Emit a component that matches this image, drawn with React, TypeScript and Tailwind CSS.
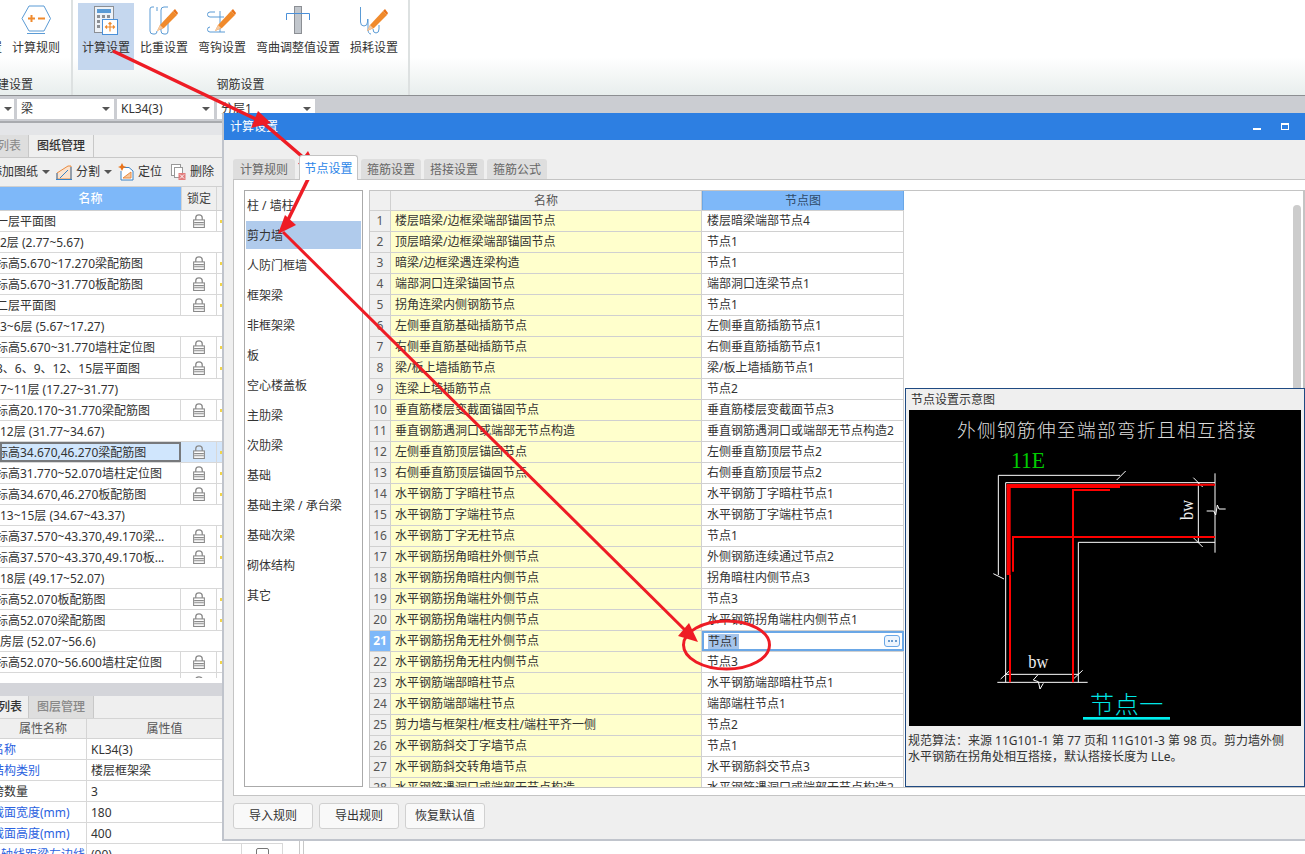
import React from 'react'

const drawingRows: { name: string; kind?: 'group' | 'selected' }[] = [
  { name: '一层平面图' },
  { name: '2层 (2.77~5.67)', kind: 'group' },
  { name: '标高5.670~17.270梁配筋图' },
  { name: '标高5.670~31.770板配筋图' },
  { name: '二层平面图' },
  { name: '3~6层 (5.67~17.27)', kind: 'group' },
  { name: '标高5.670~31.770墙柱定位图' },
  { name: '3、6、9、12、15层平面图' },
  { name: '7~11层 (17.27~31.77)', kind: 'group' },
  { name: '标高20.170~31.770梁配筋图' },
  { name: '12层 (31.77~34.67)', kind: 'group' },
  { name: '标高34.670,46.270梁配筋图', kind: 'selected' },
  { name: '标高31.770~52.070墙柱定位图' },
  { name: '标高34.670,46.270板配筋图' },
  { name: '13~15层 (34.67~43.37)', kind: 'group' },
  { name: '标高37.570~43.370,49.170梁...' },
  { name: '标高37.570~43.370,49.170板...' },
  { name: '18层 (49.17~52.07)', kind: 'group' },
  { name: '标高52.070板配筋图' },
  { name: '标高52.070梁配筋图' },
  { name: '房层 (52.07~56.6)', kind: 'group' },
  { name: '标高52.070~56.600墙柱定位图' },
  { name: '' },
]

const props = [
  ['名称', 'KL34(3)', true],
  ['结构类别', '楼层框架梁', true],
  ['跨数量', '3', false],
  ['截面宽度(mm)', '180', true],
  ['截面高度(mm)', '400', true],
] as const

const categories = ['柱 / 墙柱', '剪力墙', '人防门框墙', '框架梁', '非框架梁', '板', '空心楼盖板', '主肋梁', '次肋梁', '基础', '基础主梁 / 承台梁', '基础次梁', '砌体结构', '其它']

const nodeRows = [
  ['楼层暗梁/边框梁端部锚固节点', '楼层暗梁端部节点4'],
  ['顶层暗梁/边框梁端部锚固节点', '节点1'],
  ['暗梁/边框梁遇连梁构造', '节点1'],
  ['端部洞口连梁锚固节点', '端部洞口连梁节点1'],
  ['拐角连梁内侧钢筋节点', '节点1'],
  ['左侧垂直筋基础插筋节点', '左侧垂直筋插筋节点1'],
  ['右侧垂直筋基础插筋节点', '右侧垂直筋插筋节点1'],
  ['梁/板上墙插筋节点', '梁/板上墙插筋节点1'],
  ['连梁上墙插筋节点', '节点2'],
  ['垂直筋楼层变截面锚固节点', '垂直筋楼层变截面节点3'],
  ['垂直钢筋遇洞口或端部无节点构造', '垂直钢筋遇洞口或端部无节点构造2'],
  ['左侧垂直筋顶层锚固节点', '左侧垂直筋顶层节点2'],
  ['右侧垂直筋顶层锚固节点', '右侧垂直筋顶层节点2'],
  ['水平钢筋丁字暗柱节点', '水平钢筋丁字暗柱节点1'],
  ['水平钢筋丁字端柱节点', '水平钢筋丁字端柱节点1'],
  ['水平钢筋丁字无柱节点', '节点1'],
  ['水平钢筋拐角暗柱外侧节点', '外侧钢筋连续通过节点2'],
  ['水平钢筋拐角暗柱内侧节点', '拐角暗柱内侧节点3'],
  ['水平钢筋拐角端柱外侧节点', '节点3'],
  ['水平钢筋拐角端柱内侧节点', '水平钢筋拐角端柱内侧节点1'],
  ['水平钢筋拐角无柱外侧节点', '节点1'],
  ['水平钢筋拐角无柱内侧节点', '节点3'],
  ['水平钢筋端部暗柱节点', '水平钢筋端部暗柱节点1'],
  ['水平钢筋端部端柱节点', '端部端柱节点1'],
  ['剪力墙与框架柱/框支柱/端柱平齐一侧', '节点2'],
  ['水平钢筋斜交丁字墙节点', '节点1'],
  ['水平钢筋斜交转角墙节点', '水平钢筋斜交节点3'],
  ['水平钢筋遇洞口或端部无节点构造', '水平钢筋遇洞口或端部无节点构造2'],
]

// -------------------------------------------------------------
// Icons
// -------------------------------------------------------------
const Pencil = ({ x = 0 }: { x?: number }) => (
  <g transform={`translate(${x} 0)`}>
    <path d="M8 26 L11 20 L24 6 L28 10 L15 23 Z" fill="#f08a2c" />
    <path d="M8 26 L11 20 L14 23 Z" fill="#f5c9a0" />
    <path d="M24 6 L26 4 L29 8 L28 10 Z" fill="#e9731a" />
  </g>
)

const RuleIcon = () => (
  <svg width="32" height="31" viewBox="0 0 32 31" fill="none">
    <path d="M9 1 H24 L30.500 13.500 L24 26 H9 L2 13.500 Z" stroke="#5b9bd5" />
    <path d="M7 28.500 H25" stroke="#5b9bd5" />
    <path d="M8 13.500 H15 M11.500 10 V17 M18 13.500 H25" stroke="#f08a2c" strokeWidth="2" />
  </svg>
)

const CalcIcon = () => (
  <svg width="26" height="30" viewBox="0 0 26 30" fill="none">
    <rect x="1.500" y="1.500" width="19" height="26" fill="#eef2f7" stroke="#8c8f94" />
    <rect x="4" y="4" width="14" height="4" fill="#5b9bd5" />
    <path d="M4 10 h3 v3 h-3 Z M9 10 h3 v3 h-3 Z M14 10 h3 v3 h-3 Z M4 15 h3 v3 h-3 Z M4 20 h3 v3 h-3 Z" fill="#8c8f94" />
    <rect x="9.500" y="14.500" width="15" height="15" fill="#fff" stroke="#4a90d9" />
    <path d="M17 17.500 V26.500 M12.500 22 H21.500 M15.500 19 L17 17.500 L18.500 19 M14 20.500 L12.500 22 L14 23.500 M20 20.500 L21.500 22 L20 23.500" stroke="#f08a2c" strokeWidth="1.200" />
  </svg>
)

const SpringIcon = () => (
  <svg width="30" height="30" viewBox="0 0 30 30" fill="none">
    <path d="M5 2 H3 Q1 2 1 4 V26 Q1 29 4 29 H6 Q8 29 8 26 M19 2 H15 Q12 2 12 5 V26 Q12 29 15 29 H17 Q19 29 19 26 M8 2 V6 M19 12 V26" stroke="#5b9bd5" />
    <Pencil />
  </svg>
)

const HookIcon = () => (
  <svg width="30" height="30" viewBox="0 0 30 30" fill="none">
    <path d="M8 7 H3 Q0.500 7 0.500 9.500 Q0.500 12 3 12 H17 M3 22 Q0.500 22 0.500 24.500 Q0.500 27 3 27 H18 M13 6 V27" stroke="#5b9bd5" />
    <Pencil x={0} />
  </svg>
)

const BendIcon = () => (
  <svg width="26" height="30" viewBox="0 0 26 30" fill="none">
    <rect x="9.500" y="1.500" width="7" height="27" fill="#c1c6cc" stroke="#8c8f94" />
    <path d="M1.500 15 V8.500 H24.500 V15" stroke="#4a90d9" />
  </svg>
)

const LossIcon = () => (
  <svg width="30" height="30" viewBox="0 0 30 30" fill="none">
    <path d="M1.500 2 V17 Q1.500 21 5 21 Q8.500 21 8.500 17 V14 M9 14 V24 Q9 29 12 29 M14 24 Q14 28 17 28 Q20 28 20 24 V20" stroke="#5b9bd5" />
    <Pencil />
  </svg>
)

const LockIcon = () => (
  <svg width="12" height="14" viewBox="0 0 11 13" fill="none">
    <path d="M2.500 6 V3.500 Q2.500 0.800 5.500 0.800 Q8.500 0.800 8.500 3.500 V6" stroke="#8a8a8a" strokeWidth="1.200" />
    <rect x="0.500" y="5.500" width="10" height="7" fill="#fff" stroke="#8a8a8a" />
    <path d="M1 8 H10 M1 10 H10" stroke="#8a8a8a" />
  </svg>
)

const SplitIcon = () => (
  <svg width="16" height="15" viewBox="0 0 16 15" fill="none">
    <path d="M1 14 V8 L12 1 H15 V14 Z" fill="#fbe3cf" stroke="#e98a3f" />
    <path d="M0 14.500 H16 M1 8 V14 M15 2 V14" stroke="#3b82c4" />
    <path d="M4 13 L12 5" stroke="#3b82c4" />
  </svg>
)

const LocateIcon = () => (
  <svg width="16" height="18" viewBox="0 0 16 18" fill="none">
    <path d="M5 4.500 H11 L15 8 V17 H3 V8" fill="#fff" stroke="#3b82c4" />
    <path d="M5 15 L13 9 V15 Z" fill="#f6c79f" stroke="#e98a3f" />
    <path d="M4 0 L5.500 3 L8.500 4 L5.500 5 L4 8 L2.500 5 L0 4 L2.500 3 Z" fill="#e9731a" />
  </svg>
)

const DeleteIcon = () => (
  <svg width="15" height="16" viewBox="0 0 15 16" fill="none">
    <rect x="0.500" y="0.500" width="9" height="11" fill="#fff" stroke="#999" />
    <rect x="3.500" y="3.500" width="8" height="10" fill="#fff" stroke="#999" />
    <rect x="7.500" y="9" width="7" height="7" fill="#e27c7c" />
    <path d="M9 10.500 L13 14.500 M13 10.500 L9 14.500" stroke="#fff" />
  </svg>
)

const Caret = () => <span className="block h-0 w-0 border-x-[4px] border-t-[4px] border-x-transparent border-t-[#555]" />

// -------------------------------------------------------------
// Ribbon and combo strip
// -------------------------------------------------------------
function RibbonItem({ icon, label, active }: { icon: React.ReactNode; label: string; active?: boolean }) {
  return (
    <div className={`flex h-[67px] flex-col items-center px-[4px] ${active ? 'bg-[#c5d7ee]' : ''}`}>
      <div className="flex h-[36px] items-start justify-center pt-[2px]">{icon}</div>
      <span className="mt-[1px] whitespace-nowrap text-[12px] leading-[16px]">{label}</span>
    </div>
  )
}

function Ribbon() {
  return (
    <div className="flex h-[96px] border-b border-[#8d8f92] bg-linear-to-b from-white from-60% to-[#e8eeed] text-[#333]">
      <div className="flex w-[73px] flex-col overflow-hidden border-r-2 border-[#dde1e1] pb-[2px]">
        <div className="flex h-[70px] pt-[3px]">
          <span className="-ml-[22px] mt-[37px] w-[24px] whitespace-nowrap text-[12px] leading-[16px]">设置</span>
          <div className="ml-[6px]"><RibbonItem icon={<RuleIcon />} label="计算规则" /></div>
        </div>
        <div className="-ml-[3px] mt-[4px] whitespace-nowrap text-[12px] leading-[22px]">建设置</div>
      </div>
      <div className="flex w-[337px] flex-col border-r-2 border-[#dde1e1] pb-[2px]">
        <div className="flex h-[70px] gap-[2px] pl-[5px] pt-[3px]">
          <RibbonItem active icon={<CalcIcon />} label="计算设置" />
          <RibbonItem icon={<SpringIcon />} label="比重设置" />
          <RibbonItem icon={<HookIcon />} label="弯钩设置" />
          <RibbonItem icon={<BendIcon />} label="弯曲调整值设置" />
          <RibbonItem icon={<LossIcon />} label="损耗设置" />
        </div>
        <div className="mt-[4px] text-center text-[12px] leading-[22px]">钢筋设置</div>
      </div>
    </div>
  )
}

function Combo({ text, width }: { text: string; width: string }) {
  return (
    <div className={`flex h-[20px] items-center justify-between bg-white px-[4px] text-[12px] text-[#333] ${width}`}>
      <span>{text}</span>
      <Caret />
    </div>
  )
}

function ComboStrip() {
  return (
    <div className="flex h-[27px] items-start gap-[3px] border-b-2 border-[#a9abaf] bg-[#cbcdd2] pt-[3px]">
      <Combo text="" width="w-[14px]" />
      <Combo text="梁" width="w-[97px]" />
      <Combo text="KL34(3)" width="w-[97px]" />
      <Combo text="分层1" width="w-[98px]" />
    </div>
  )
}

// -------------------------------------------------------------
// Left panel
// -------------------------------------------------------------
function DrawingPanel() {
  return (
    <div className="flex h-[555px] flex-col overflow-hidden bg-[#efefef] text-[12px] text-[#333]">
      <div className="h-[12px] shrink-0 bg-[#e4e5e8]" />
      <div className="flex h-[23px] shrink-0 border-b border-[#c8c8c8]">
        <div className="w-[29px] overflow-hidden border-r border-[#c8c8c8] bg-[#dedede] leading-[22px] text-[#888]">
          <span className="-ml-[3px] block whitespace-nowrap">列表</span>
        </div>
        <div className="w-[65px] border-r border-[#c8c8c8] text-center font-medium leading-[22px]">图纸管理</div>
      </div>
      <div className="flex h-[28px] shrink-0 items-center whitespace-nowrap text-[#333]">
        <span className="-ml-[10px]">添加图纸</span>
        <span className="ml-[4px]"><Caret /></span>
        <span className="ml-[6px]"><SplitIcon /></span>
        <span className="ml-[4px]">分割</span>
        <span className="ml-[4px]"><Caret /></span>
        <span className="ml-[6px]"><LocateIcon /></span>
        <span className="ml-[4px]">定位</span>
        <span className="ml-[9px]"><DeleteIcon /></span>
        <span className="ml-[4px]">删除</span>
      </div>
      <div className="flex h-[25px] w-[283px] shrink-0 border-y border-[#d0d0d0] leading-[23px]">
        <div className="w-[181px] bg-[#7eb8f9] text-center font-medium text-white">名称</div>
        <div className="w-[36px] border-x border-[#d5d5d5] text-center text-[#444]">锁定</div>
      </div>
      <div className="h-[467px] w-[283px] shrink-0 overflow-hidden bg-white">
        {drawingRows.map((row, i) => (
          <div
            key={i}
            className={`flex h-[21px] border-b border-[#d8d8d8] leading-[21px] ${row.kind === 'selected' ? 'bg-[#d4e7fc]' : ''}`}
          >
            {row.kind === 'group' ? (
              <div className="whitespace-nowrap">{row.name}</div>
            ) : (
              <>
                <div
                  className={`w-[181px] overflow-hidden whitespace-nowrap ${
                    row.kind === 'selected' ? 'border-2 border-[#77797c] bg-[#d0e6fd] leading-[17px]' : 'border-r border-[#d8d8d8]'
                  }`}
                >
                  <span className={`block ${row.kind === 'selected' ? '-ml-[6px]' : '-ml-[4px]'}`}>{row.name}</span>
                </div>
                <div className="flex w-[36px] items-center justify-center border-r border-[#d8d8d8]"><LockIcon /></div>
                <div className="flex w-[20px] items-center pl-[3px]"><span className="h-[3px] w-[2px] bg-[#f2d54a]" /></div>
              </>
            )}
          </div>
        ))}
      </div>
    </div>
  )
}

function PropertyPanel() {
  return (
    <div className="flex h-[176px] flex-col overflow-hidden text-[12px] text-[#333]">
      <div className="h-[5px] shrink-0 bg-white" />
      <div className="h-[13px] shrink-0 bg-[#d4d5da]" />
      <div className="flex h-[22px] shrink-0 bg-[#efefef]">
        <div className="w-[29px] overflow-hidden border-r border-[#c8c8c8] font-medium leading-[21px]">
          <span className="-ml-[2px] block whitespace-nowrap">列表</span>
        </div>
        <div className="w-[65px] border-r border-[#c8c8c8] bg-[#dedede] text-center font-medium leading-[21px] text-[#888]">图层管理</div>
      </div>
      <div className="flex h-[21px] shrink-0 border-y border-[#d4d4d4] bg-[#efefef] leading-[19px] text-[#555]">
        <div className="w-[87px] border-r border-[#d4d4d4] text-center">属性名称</div>
        <div className="w-[155px] text-center">属性值</div>
      </div>
      {props.map(([name, value, blue]) => (
        <div key={name} className="flex h-[21px] w-[283px] shrink-0 border-b border-[#d8d8d8] bg-white leading-[21px]">
          <div className={`w-[87px] overflow-hidden whitespace-nowrap border-r border-[#d8d8d8] ${blue ? 'text-[#2b62e0]' : ''}`}>
            <span className="-ml-[8px] block">{name}</span>
          </div>
          <div className="pl-[4px]">{value}</div>
        </div>
      ))}
      <div className="flex h-[21px] w-[283px] shrink-0 bg-white leading-[21px]">
        <div className="w-[87px] overflow-hidden whitespace-nowrap border-r border-[#d8d8d8] pl-[1px] text-[#2b62e0]">轴线距梁左边线</div>
        <div className="w-[155px] border-r border-[#d8d8d8] pl-[4px]">(00)</div>
        <div className="flex w-[41px] justify-center border-r border-[#d8d8d8] pt-[4px]">
          <span className="h-[13px] w-[13px] rounded-[2px] border border-[#777]" />
        </div>
      </div>
    </div>
  )
}

// -------------------------------------------------------------
// Dialog
// -------------------------------------------------------------
function DialogTabs() {
  const tabs = ['计算规则', '节点设置', '箍筋设置', '搭接设置', '箍筋公式']
  return (
    <div className="flex h-[39px] shrink-0 items-end pl-[9px]">
      {tabs.map((tab, i) =>
        tab === '节点设置' ? (
          <div key={tab} className="relative z-10 -mb-px ml-[1px] mr-[3px] flex h-[25px] w-[59px] items-center justify-center rounded-t-[3px] border border-b-0 border-[#c4c4c4] bg-white pt-[2px] text-[#2d86e8]">
            {tab}
          </div>
        ) : (
          <div key={tab} className={`mr-[3px] flex h-[20px] items-center justify-center rounded-t-[3px] bg-[#dedede] pt-[2px] text-[#666] ${i === 0 ? 'w-[62px]' : 'w-[60px]'}`}>
            {tab}
          </div>
        )
      )}
    </div>
  )
}

function CategoryList() {
  return (
    <div className="h-[597px] w-[119px] shrink-0 border border-[#aaaaaa] px-[1px]">
      {categories.map((c, i) => (
        <div key={c} className={`mb-[2px] flex h-[28px] items-center whitespace-nowrap pl-[1px] pt-[2px] ${i === 1 ? 'bg-[#b0cbec]' : ''}`}>
          <span className="block">{c}</span>
        </div>
      ))}
    </div>
  )
}

function NodeTable() {
  return (
    <div className="relative h-[598px] flex-1 overflow-hidden border border-r-2 border-[#c4c4c4]">
      <div className="flex h-[20px] w-[534px] border-b border-[#d0d0d0] bg-[#f0f0f0] leading-[19px] text-[#555]">
        <div className="w-[21px] border-r border-[#d0d0d0]" />
        <div className="w-[311px] border-r border-[#d0d0d0] text-center">名称</div>
        <div className="w-[202px] border-x border-[#6aa7e6] bg-[#7eb8f9] text-center text-[#2f4a68]">节点图</div>
      </div>
      {nodeRows.map(([name, value], i) => {
        const editing = i === 20
        return (
          <div key={i} className="flex h-[21px] w-[534px] border-b border-[#d0d0d0] leading-[20px]">
            <div className={`w-[21px] border-r border-[#d0d0d0] text-center ${editing ? 'bg-[#7eb8f9] font-bold text-white' : 'bg-[#f0f0f0] text-[#555]'}`}>{i + 1}</div>
            <div className="w-[311px] overflow-hidden whitespace-nowrap border-r border-[#d0d0d0] bg-[#ffffcc] pl-[4px]">{name}</div>
            {editing ? (
              <div className="flex w-[202px] items-center justify-between border-2 border-[#6aa7e6] bg-white pl-[4px] pr-[2px]">
                <span className="bg-[#a5c4ea] leading-[15px]">{value}</span>
                <span className="flex h-[12px] w-[16px] items-center justify-center gap-[1.5px] rounded-[3px] border border-[#6aa7e6] bg-[#eef5fd]">
                  <span className="h-[2px] w-[2px] bg-[#6a9ccf]" />
                  <span className="h-[2px] w-[2px] bg-[#6a9ccf]" />
                  <span className="h-[2px] w-[2px] bg-[#6a9ccf]" />
                </span>
              </div>
            ) : (
              <div className="w-[202px] overflow-hidden whitespace-nowrap border-r border-[#d0d0d0] pl-[5px]">{value}</div>
            )}
          </div>
        )
      })}
      <div className="absolute left-[923px] top-[14px] h-[190px] w-[8px] rounded-t-[4px] bg-[#cccccc]" />
    </div>
  )
}

function NodeDiagram() {
  const serif = 'Liberation Serif, serif'
  return (
    <svg width="392" height="316" viewBox="12 75 1176 948" className="block bg-black">
      <text x="606" y="155" textAnchor="middle" fontSize="56" fontWeight="300" fill="#dddddd" letterSpacing="4">外侧钢筋伸至端部弯折且相互搭接</text>
      <text x="318" y="248" fontSize="72" fontFamily={serif} fill="#00cc00" textLength="102" lengthAdjust="spacingAndGlyphs">11E</text>
      <g stroke="#fff" strokeWidth="3" fill="none">
        <path d="M645 271 H280 V570" />
        <path d="M635 285 L662 258 M265 566 L297 582" />
        <path d="M302 892 V293 H930 M930 265 V503 M880 293 V472 M520 892 V472 H930" />
        <path d="M302 868 H520 M277 892 H548" />
        <path d="M865 278 L893 306 M865 458 L893 486 M287 882 L315 856 M505 882 L533 856" />
        <path d="M905 378 H926 L932 390 L937 360 L942 372 H962" />
        <path d="M398 870 L385 885 L400 890 L405 912 L415 895" />
      </g>
      <g stroke="#ff0000" fill="none">
        <path d="M311 300 V570" strokeWidth="12" />
        <path d="M315 570 V892" strokeWidth="6" />
        <path d="M305 303 H645" strokeWidth="12" />
        <path d="M645 299 H930" strokeWidth="6" />
        <path d="M504 892 V315 H615" strokeWidth="6" />
        <path d="M324 560 V456 H930" strokeWidth="6" />
      </g>
      <text x="864" y="405" fontSize="58" fontFamily={serif} fill="#eeeeee" textLength="60" lengthAdjust="spacingAndGlyphs" transform="rotate(-90 864 405)">bw</text>
      <text x="370" y="850" fontSize="58" fontFamily={serif} fill="#eeeeee" textLength="60" lengthAdjust="spacingAndGlyphs">bw</text>
      <text x="555" y="983" fontSize="72" fontWeight="300" fill="#00e5e5" letterSpacing="2">节点一</text>
      <rect x="534" y="996" width="261" height="8" fill="#00f0f0" />
    </svg>
  )
}

function PreviewPopup() {
  return (
    <div className="absolute left-[681px] top-[275px] h-[399px] w-[400px] border border-[#1f4a82] bg-[#efefef] text-[12px] text-[#333]">
      <div className="pl-[5px] leading-[21px]">节点设置示意图</div>
      <div className="px-[3px]"><NodeDiagram /></div>
      <div className="mt-[7px] whitespace-nowrap pl-[2px] leading-[16px]">
        <div>规范算法：来源 11G101-1 第 77 页和 11G101-3 第 98 页。剪力墙外侧</div>
        <div>水平钢筋在拐角处相互搭接，默认搭接长度为 LLe。</div>
      </div>
    </div>
  )
}

function SettingsDialog() {
  return (
    <div className="absolute left-[222px] top-[113px] flex h-[728px] w-[1083px] flex-col border-b-2 border-l-2 border-[#c0c4cc] bg-[#efefef] text-[12px] text-[#333]">
      <div className="flex h-[27px] shrink-0 items-center justify-between bg-[#2d7fe2] pl-[6px] pr-[16px] text-white">
        <span>计算设置</span>
        <div className="flex items-center gap-[20px]">
          <span className="mt-[5px] h-[2px] w-[8px] bg-white" />
          <span className="h-[7px] w-[8px] border border-t-2 border-white" />
        </div>
      </div>
      <DialogTabs />
      <div className="ml-[9px] flex h-[617px] shrink-0 gap-[6px] border-y border-l border-[#c4c4c4] bg-white pl-[10px] pt-[10px]">
        <CategoryList />
        <NodeTable />
      </div>
      <div className="flex gap-[6px] pl-[9px] pt-[7px]">
        {['导入规则', '导出规则', '恢复默认值'].map((b) => (
          <div key={b} className="flex h-[26px] w-[80px] items-center justify-center rounded-[3px] border border-[#d0d0d0] bg-[#f9f9f9]">
            {b}
          </div>
        ))}
      </div>
      <PreviewPopup />
    </div>
  )
}

// -------------------------------------------------------------
// Red markup drawn on top of the screenshot
// -------------------------------------------------------------
function Markup() {
  return (
    <svg width="1305" height="854" className="pointer-events-none absolute left-0 top-0" fill="none">
      <g stroke="#ee1c25">
        <path d="M113 51 L262 122 L312 165" strokeWidth="3.500" />
        <path d="M315 165 L284 228" strokeWidth="3.500" />
        <path d="M283 232 L692 637" strokeWidth="3" />
        <ellipse cx="726.500" cy="645" rx="43" ry="24" strokeWidth="3" />
      </g>
      <g fill="#ee1c25">
        <path d="M258 111 L251 128 L271 123 Z" />
        <path d="M308 151 L298 164 L316 167 Z" />
        <path d="M285 215 L278 234 L296 225 Z" />
        <path d="M689 623 L678 636 L698 642 Z" />
      </g>
    </svg>
  )
}

export default function App() {
  return (
    <div className="relative h-[854px] w-[1305px] overflow-hidden bg-white font-['Noto_Sans','Noto_Sans_CJK_SC',sans-serif]">
      <Ribbon />
      <ComboStrip />
      <div className="flex">
        <div className="w-[283px] shrink-0">
          <DrawingPanel />
          <PropertyPanel />
        </div>
        <div className="ml-[16px] w-[5px] border-x border-[#c8c8c8]" />
      </div>
      <SettingsDialog />
      <Markup />
    </div>
  )
}
